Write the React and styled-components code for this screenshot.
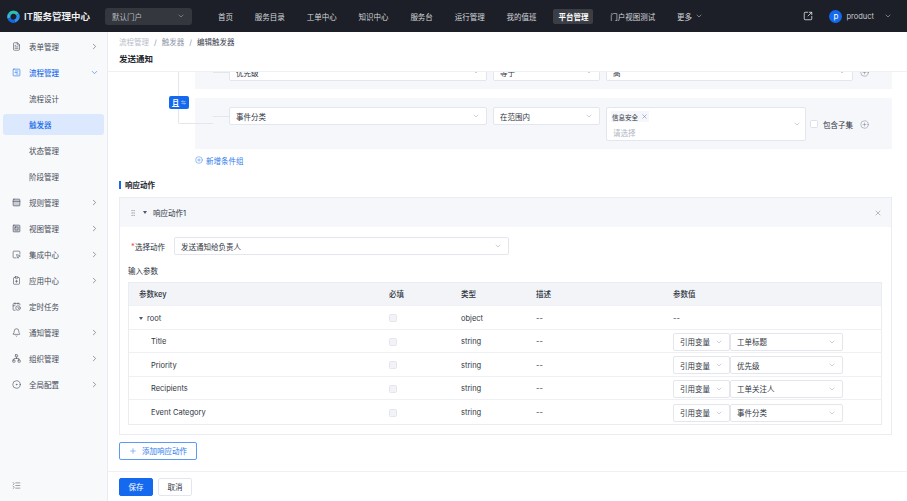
import React from 'react';
import styled, { createGlobalStyle } from 'styled-components';
import {
  ChevronDown, ChevronRight, FileText, SquareChartGantt, PanelTop, SquareSquare, SquareMousePointer, ClipboardPlus, CalendarClock,
  Bell, Network, CircleDot, ListCollapse, SquareArrowOutUpRight, CirclePlus, X, Plus, GripVertical, ArrowLeftRight,
} from 'lucide-react';

const GlobalStyle = createGlobalStyle`
  html, body { margin: 0; padding: 0; height: 100%; overflow: hidden; }
  body {
    font-family: Inter, "Noto Sans CJK SC", sans-serif;
    font-size: 7.5px;
    color: #2f3542;
    background: #fff;
  }
  * { box-sizing: border-box; }
`;

const Page = styled.div`
  display: flex;
  flex-direction: column;
  width: 100vw;
  height: 100vh;
`;

const TopBar = styled.header`
  display: flex;
  align-items: center;
  flex: 0 0 32px;
  padding-left: 7px;
  background: #1c1f27;
  color: #d5d7db;
`;

const Brand = styled.div`
  display: flex;
  align-items: center;
  gap: 4px;
  width: 98px;
  font-size: 9.5px;
  font-weight: 600;
  color: #f0f1f3;
  white-space: nowrap;
`;

const PortalSelect = styled.div`
  display: flex;
  align-items: center;
  justify-content: space-between;
  width: 87px;
  height: 17px;
  padding: 0 7px;
  border-radius: 3px;
  background: #34373e;
  color: #b8babf;
`;

const Nav = styled.nav`
  display: flex;
  align-items: center;
  gap: 11.85px;
  margin-left: 21px;
`;

const NavItem = styled.div`
  display: flex;
  align-items: center;
  gap: 3px;
  height: 15px;
  padding: 0 5px;
  border-radius: 2px;
  white-space: nowrap;
  background: ${(p) => (p.$active ? '#3b3e45' : 'transparent')};
  color: ${(p) => (p.$active ? '#fff' : '#d5d7db')};
  font-weight: ${(p) => (p.$active ? 600 : 400)};
`;

const TopRight = styled.div`
  display: flex;
  align-items: center;
  margin-left: auto;
  padding-right: 15px;
`;

const Avatar = styled.div`
  display: flex;
  align-items: center;
  justify-content: center;
  width: 13px;
  height: 13px;
  margin: 0 4px 0 16px;
  border-radius: 50%;
  background: #1569ee;
  color: #fff;
  font-size: 8px;
`;

const UserName = styled.span`
  margin-right: 10px;
  font-size: 7.5px;
  color: #c9cbd0;
`;

const Body = styled.div`
  display: flex;
  flex: 1;
  min-height: 0;
`;

const Sidebar = styled.aside`
  display: flex;
  flex-direction: column;
  flex: 0 0 108px;
  padding-top: 1px;
  border-right: 1px solid #e9ecf0;
  background: #f8f9fb;
`;

const SideItem = styled.div`
  display: flex;
  align-items: center;
  flex: 0 0 21px;
  margin: 2.5px 3px;
  padding: 0 5px 0 ${(p) => (p.$sub ? '26px' : '9px')};
  gap: 8px;
  border-radius: 3px;
  background: ${(p) => (p.$selected ? '#dbe8fd' : 'transparent')};
  color: ${(p) => (p.$selected || p.$open ? '#1f6fe8' : '#464c59')};
  font-weight: ${(p) => (p.$selected || p.$open ? 500 : 400)};

  svg:last-child:not(:first-child) {
    margin-left: auto;
  }
`;

const SideFooter = styled.div`
  display: flex;
  margin-top: auto;
  padding: 0 0 11px 12px;
  color: #555b68;
`;

const Main = styled.main`
  display: flex;
  flex-direction: column;
  flex: 1;
  min-width: 0;
`;

const PageHead = styled.div`
  flex: 0 0 40px;
  padding: 5px 11px 0;
  border-bottom: 1px solid #eef0f3;
`;

const Crumbs = styled.div`
  display: flex;
  gap: 5px;
  height: 11px;
  line-height: 11px;
  color: #8d96a8;
`;

const Crumb = styled.span`
  color: ${(p) => p.$color || 'inherit'};
`;

const PageTitle = styled.h1`
  margin: 5px 0 0;
  font-size: 8.5px;
  line-height: 12px;
  font-weight: 600;
  color: #20242d;
`;

const Scroll = styled.div`
  flex: 1;
  min-height: 0;
  overflow: hidden;
  padding: 0 15px 0 11px;
`;

const Tree = styled.div`
  position: relative;
  display: flex;
  flex-direction: column;
  gap: 9px;
  margin-top: -18px;
  padding-left: 76px;
`;

const TreeLine = styled.div`
  position: absolute;
  z-index: 1;
  left: 59px;
  top: 0;
  width: 35px;
  height: 70px;
  border-left: 1px solid #e3e6eb;
  border-bottom: 1px solid #e3e6eb;
  border-bottom-left-radius: 2px;
`;

const AndBadge = styled.div`
  position: absolute;
  z-index: 2;
  left: 50px;
  top: 42px;
  display: flex;
  align-items: center;
  justify-content: center;
  gap: 2px;
  width: 20px;
  height: 13px;
  border-radius: 2px;
  background: #1569ee;
  color: #fff;
  font-weight: 600;
`;

const Group = styled.div`
  position: relative;
  display: flex;
  align-items: flex-start;
  gap: 6px;
  padding: 9px 0 8px 34px;
  background: #f5f7fa;

  &::before {
    content: '';
    position: absolute;
    left: 18px;
    top: 18px;
    width: 16px;
    border-top: 1px solid #e3e6eb;
  }
`;

const SelectBox = styled.div`
  display: flex;
  align-items: center;
  justify-content: space-between;
  flex: 0 0 ${(p) => p.$w}px;
  width: ${(p) => p.$w}px;
  height: 18px;
  padding: 0 6px;
  border: 1px solid #e3e7ed;
  border-radius: 2px;
  background: #fff;
  color: #2f3542;
`;

const MultiBox = styled.div`
  position: relative;
  flex: 0 0 200px;
  height: 34px;
  padding: 3px 4px;
  border: 1px solid #e3e7ed;
  border-radius: 2px;
  background: #fff;
`;

const MultiArrow = styled.span`
  position: absolute;
  right: 4px;
  top: 12px;
  display: flex;
  color: #99a1b0;
`;

const Tag = styled.span`
  display: inline-flex;
  align-items: center;
  gap: 3px;
  height: 11px;
  padding: 0 1px;
  font-size: 6.5px;
  background: #f6f7fa;
`;

const Placeholder = styled.div`
  margin: 5px 0 0 2px;
  color: #b1b7c3;
`;

const Arrow = styled(ChevronDown).attrs({ size: 8, strokeWidth: 1.5 })`
  flex: none;
  color: #99a1b0;
`;

const SideRow = styled.div`
  display: flex;
  align-items: center;
  height: 34px;
  margin-left: -2px;
  color: #2f3542;
`;

const Check = styled.span`
  display: inline-block;
  flex: none;
  width: 8px;
  height: 8px;
  border: 1px solid ${(p) => (p.$disabled ? '#e3e6ec' : '#dde1e8')};
  border-radius: 1.5px;
  background: ${(p) => (p.$disabled ? '#f1f3f6' : '#fff')};
`;

const CheckLabel = styled.span`
  margin-left: 5px;
`;

const AddCircle = styled(CirclePlus).attrs({ size: 9, strokeWidth: 1.2 })`
  flex: none;
  color: #6d7686;
`;

const AddIconSlot = styled.div`
  display: flex;
  align-items: center;
  height: ${(p) => p.$h}px;
  margin-left: 1px;
`;

const AddGroup = styled.div`
  display: flex;
  align-items: center;
  gap: 3px;
  height: 22px;
  padding-left: 76px;
  color: #2f7bec;
`;

const SectionTitle = styled.div`
  height: 8px;
  margin: 10px 0 8px;
  padding-left: 4px;
  border-left: 2px solid #1569ee;
  line-height: 9px;
  font-weight: 600;
  color: #20242d;
`;

const ActionCard = styled.section`
  border: 1px solid #e9ecf1;
`;

const CardHead = styled.div`
  display: flex;
  align-items: center;
  height: 29px;
  padding: 0 9px;
  background: #f5f7fa;
  color: #2f3542;
`;

const Caret = styled.span`
  flex: none;
  width: 0;
  height: 0;
  margin: ${(p) => p.$m || '0'};
  border-left: 2.5px solid transparent;
  border-right: 2.5px solid transparent;
  border-top: 3.5px solid #4d5a70;
`;

const CloseBtn = styled(X).attrs({ size: 8, strokeWidth: 1.4 })`
  margin: 0 0 0 auto;
  color: #6d7686;
`;

const CardBody = styled.div`
  padding: 10px 9px 9px 8px;
`;

const FormRow = styled.div`
  display: flex;
  align-items: center;
  padding-left: 3px;
`;

const Required = styled.span`
  width: 4px;
  color: #e5484d;
`;

const FormLabel = styled.span`
  width: 39px;
`;

const ParamsLabel = styled.div`
  height: 11px;
  margin: 11px 0 5px;
  line-height: 11px;
`;

const ParamTable = styled.div`
  border: 1px solid #e9ecf1;
`;

const Row = styled.div`
  display: grid;
  grid-template-columns: 250px 72px 75px 137px 1fr;
  align-items: center;
  height: ${(p) => (p.$head ? 23 : 23.6)}px;
  padding: ${(p) => (p.$head ? '0 0 2px' : '1.5px 0 0')};
  background: ${(p) => (p.$head ? '#f2f4f7' : '#fff')};
  border-bottom: ${(p) => (p.$last ? 'none' : '1px solid #eef0f3')};
  font-weight: ${(p) => (p.$head ? 500 : 400)};
`;

const Cell = styled.div`
  display: flex;
  align-items: center;
  padding-left: ${(p) => p.$indent || 10}px;
`;

const ValueGroup = styled.div`
  display: flex;
`;

const AddActionBtn = styled.button`
  display: flex;
  align-items: center;
  justify-content: center;
  gap: 5px;
  width: 78px;
  height: 18px;
  margin-top: 7px;
  padding: 0;
  border: 1px solid #5d9bf2;
  border-radius: 2px;
  background: #fff;
  color: #2f7bec;
  font: inherit;
`;

const Footer = styled.footer`
  display: flex;
  align-items: center;
  gap: 5px;
  flex: 0 0 30px;
  padding: 0 11px;
  border-top: 1px solid #eef0f3;
`;

const FootBtn = styled.button`
  width: 34px;
  height: 18px;
  padding: 0;
  border: 1px solid ${(p) => (p.$primary ? '#1569ee' : '#e3e7ed')};
  border-radius: 2px;
  background: ${(p) => (p.$primary ? '#1569ee' : '#fff')};
  color: ${(p) => (p.$primary ? '#fff' : '#2f3542')};
  font: inherit;
`;

const Logo = () => (
  <svg width="13" height="13" viewBox="0 0 26 26" fill="none" strokeWidth="6.5">
    <path d="M5 8.5A9.5 9.5 0 0 1 21 8.5" stroke="#2bbfae" />
    <path d="M21 8.5A9.5 9.5 0 0 1 15 22.3" stroke="#2b8ff0" />
    <path d="M15 22.3A9.5 9.5 0 0 1 4 16" stroke="#1668dc" />
    <path d="M4 16A9.5 9.5 0 0 1 5 8.5" stroke="#38b6e8" />
  </svg>
);

const navItems = ['首页', '服务目录', '工单中心', '知识中心', '服务台', '运行管理', '我的值班', '平台管理', '门户视图测试'];

const sideItems = [
  { label: '表单管理', icon: FileText, arrow: true },
  { label: '流程管理', icon: SquareChartGantt, open: true },
  { label: '流程设计', sub: true },
  { label: '触发器', sub: true, selected: true },
  { label: '状态管理', sub: true },
  { label: '阶段管理', sub: true },
  { label: '规则管理', icon: PanelTop, fill: '#c9cdd5', arrow: true },
  { label: '视图管理', icon: SquareSquare, fill: '#c9cdd5', arrow: true },
  { label: '集成中心', icon: SquareMousePointer, arrow: true },
  { label: '应用中心', icon: ClipboardPlus, arrow: true },
  { label: '定时任务', icon: CalendarClock },
  { label: '通知管理', icon: Bell, arrow: true },
  { label: '组织管理', icon: Network, arrow: true },
  { label: '全局配置', icon: CircleDot, arrow: true },
];

const params = [
  { key: 'Title', value: '工单标题' },
  { key: 'Priority', value: '优先级' },
  { key: 'Recipients', value: '工单关注人' },
  { key: 'Event Category', value: '事件分类' },
];

const App = () => (
  <Page>
    <GlobalStyle />
    <TopBar>
      <Brand><Logo />IT服务管理中心</Brand>
      <PortalSelect>默认门户<ChevronDown size={8} strokeWidth={1.5} /></PortalSelect>
      <Nav>
        {navItems.map((item) => (
          <NavItem key={item} $active={item === '平台管理'}>{item}</NavItem>
        ))}
        <NavItem>更多<ChevronDown size={8} strokeWidth={1.5} /></NavItem>
      </Nav>
      <TopRight>
        <SquareArrowOutUpRight size={10} strokeWidth={1.8} color="#f0f1f3" />
        <Avatar>p</Avatar>
        <UserName>product</UserName>
        <ChevronDown size={8} strokeWidth={1.5} />
      </TopRight>
    </TopBar>
    <Body>
      <Sidebar>
        {sideItems.map((item) => (
          <SideItem key={item.label} $sub={item.sub} $selected={item.selected} $open={item.open}>
            {item.icon && <item.icon size={9} strokeWidth={1.6} fill={item.fill || 'none'} />}
            <span>{item.label}</span>
            {item.arrow && <ChevronRight size={9} strokeWidth={1.5} />}
            {item.open && <ChevronDown size={9} strokeWidth={1.5} />}
          </SideItem>
        ))}
        <SideFooter><ListCollapse size={9} strokeWidth={1.5} /></SideFooter>
      </Sidebar>
      <Main>
        <PageHead>
          <Crumbs>
            <Crumb $color="#b7bdc9">流程管理</Crumb>
            <span>/</span>
            <Crumb>触发器</Crumb>
            <span>/</span>
            <Crumb $color="#3a404d">编辑触发器</Crumb>
          </Crumbs>
          <PageTitle>发送通知</PageTitle>
        </PageHead>
        <Scroll>
          <Tree>
            <TreeLine />
            <AndBadge>且<ArrowLeftRight size={5} strokeWidth={2} /></AndBadge>
            <Group>
              <SelectBox $w={258}>优先级<Arrow /></SelectBox>
              <SelectBox $w={107}>等于<Arrow /></SelectBox>
              <SelectBox $w={247}>高<Arrow /></SelectBox>
              <AddIconSlot $h={18}><AddCircle /></AddIconSlot>
            </Group>
            <Group>
              <SelectBox $w={258}>事件分类<Arrow /></SelectBox>
              <SelectBox $w={107}>在范围内<Arrow /></SelectBox>
              <MultiBox>
                <Tag>信息安全<X size={7} strokeWidth={1.5} color="#5560b0" /></Tag>
                <Placeholder>请选择</Placeholder>
                <MultiArrow><ChevronDown size={8} strokeWidth={1.5} /></MultiArrow>
              </MultiBox>
              <SideRow>
                <Check />
                <CheckLabel>包含子集</CheckLabel>
              </SideRow>
              <AddIconSlot $h={34}><AddCircle /></AddIconSlot>
            </Group>
          </Tree>
          <AddGroup><CirclePlus size={8} strokeWidth={1.4} />新增条件组</AddGroup>
          <SectionTitle>响应动作</SectionTitle>
          <ActionCard>
            <CardHead>
              <GripVertical size={8} strokeWidth={1.4} color="#8d96a8" />
              <Caret $m="0 6px 0 6px" />
              响应动作1
              <CloseBtn />
            </CardHead>
            <CardBody>
              <FormRow>
                <Required>*</Required>
                <FormLabel>选择动作</FormLabel>
                <SelectBox $w={335}>发送通知给负责人<Arrow /></SelectBox>
              </FormRow>
              <ParamsLabel>输入参数</ParamsLabel>
              <ParamTable>
                <Row $head>
                  <Cell>参数key</Cell>
                  <Cell>必填</Cell>
                  <Cell>类型</Cell>
                  <Cell>描述</Cell>
                  <Cell>参数值</Cell>
                </Row>
                <Row>
                  <Cell><Caret $m="0 4px 0 0" />root</Cell>
                  <Cell><Check $disabled /></Cell>
                  <Cell>object</Cell>
                  <Cell>--</Cell>
                  <Cell>--</Cell>
                </Row>
                {params.map((param, i) => (
                  <Row key={param.key} $last={i === params.length - 1}>
                    <Cell $indent={22}>{param.key}</Cell>
                    <Cell><Check $disabled /></Cell>
                    <Cell>string</Cell>
                    <Cell>--</Cell>
                    <Cell>
                      <ValueGroup>
                        <SelectBox $w={57}>引用变量<Arrow /></SelectBox>
                        <SelectBox $w={113}>{param.value}<Arrow /></SelectBox>
                      </ValueGroup>
                    </Cell>
                  </Row>
                ))}
              </ParamTable>
            </CardBody>
          </ActionCard>
          <AddActionBtn><Plus size={8} strokeWidth={1.5} />添加响应动作</AddActionBtn>
        </Scroll>
        <Footer>
          <FootBtn $primary>保存</FootBtn>
          <FootBtn>取消</FootBtn>
        </Footer>
      </Main>
    </Body>
  </Page>
);

export default App;
